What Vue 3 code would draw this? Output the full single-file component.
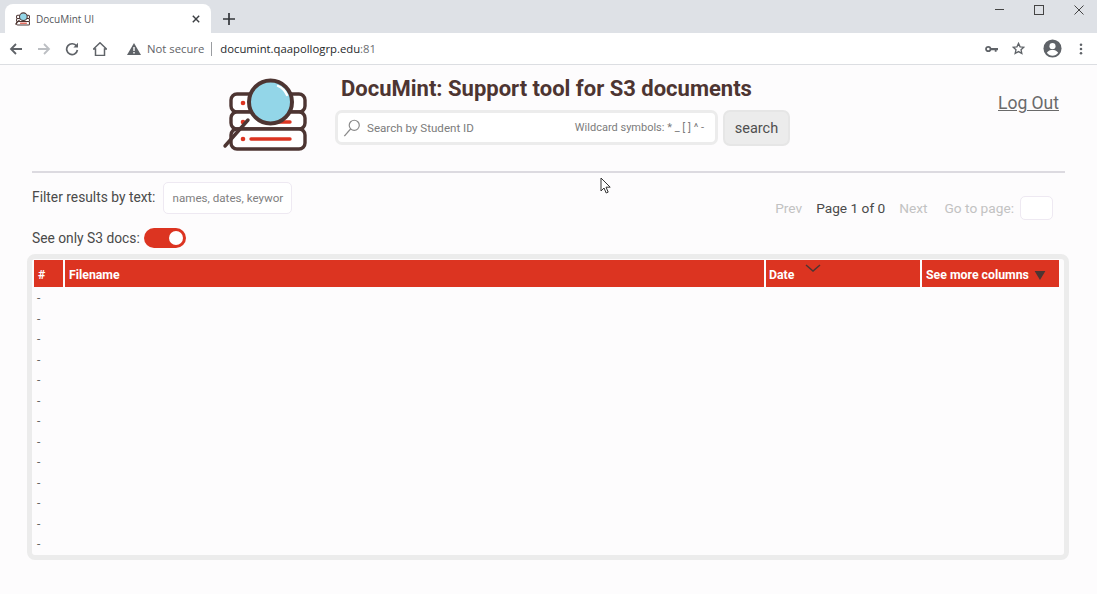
<template>
  <div class="window">
    <div class="tabstrip">
      <div class="tab">
        <svg class="favicon" viewBox="0 0 86 76" width="15" height="14">
          <g fill="#fff" stroke="#4d3532" stroke-width="6">
            <rect x="9" y="17" width="74" height="18" rx="6" />
            <rect x="9" y="35" width="74" height="17" rx="6" />
            <rect x="9" y="52" width="74" height="20" rx="6" />
          </g>
          <path d="M29 62h39" stroke="#dc3421" stroke-width="6" />
          <path d="M26 43L2 69" stroke="#4d3532" stroke-width="6" />
          <circle cx="48" cy="25" r="22" fill="#93d6e8" stroke="#4d3532" stroke-width="6" />
        </svg>
        <span class="tab-title">DocuMint UI</span>
        <svg class="tab-close" viewBox="0 0 10 10" width="8" height="8"><path d="M1 1l8 8M9 1l-8 8" stroke="#3c3f43" stroke-width="1.8" /></svg>
      </div>
      <svg class="new-tab" viewBox="0 0 12 12" width="12" height="12"><path d="M6 0v12M0 6h12" stroke="#33363a" stroke-width="1.7" /></svg>
      <div class="window-controls">
        <svg viewBox="0 0 10 10" width="10" height="10"><path d="M1 4.500h9" stroke="#444" stroke-width="1" /></svg>
        <svg viewBox="0 0 10 10" width="10" height="10"><rect x=".5" y=".5" width="9" height="9" fill="none" stroke="#444" stroke-width="1" /></svg>
        <svg viewBox="0 0 10 10" width="10" height="10"><path d="M.5.5l9 9M9.5.5l-9 9" stroke="#444" stroke-width="1" /></svg>
      </div>
    </div>

    <div class="toolbar">
      <svg class="nav" viewBox="0 0 14 14" width="14" height="14"><path d="M13 7H2M7 2L2 7l5 5" fill="none" stroke="#5f6368" stroke-width="1.8" /></svg>
      <svg class="nav" viewBox="0 0 14 14" width="14" height="14"><path d="M1 7h11M7 2l5 5-5 5" fill="none" stroke="#bcbfc3" stroke-width="1.8" /></svg>
      <svg class="nav" viewBox="0 0 14 14" width="14" height="14"><path d="M11.600 4.200A5.400 5.400 0 1 0 12.400 8" fill="none" stroke="#5f6368" stroke-width="1.700" /><path d="M8.400 5.400H13V.8z" fill="#5f6368" /></svg>
      <svg class="nav" viewBox="0 0 14 14" width="14" height="14"><path d="M7 .8L.5 7h2v6.500h9V7h2z" fill="none" stroke="#5f6368" stroke-width="1.500" /></svg>
      <svg class="warn" viewBox="0 0 14 12" width="14" height="12"><path d="M7 0l7 12H0z" fill="#5f6368" /><path d="M6.300 4h1.400v4H6.300zM6.300 9h1.400v1.400H6.300z" fill="#fff" /></svg>
      <span class="not-secure">Not secure</span>
      <span class="url-sep"></span>
      <span class="url">documint.qaapollogrp.edu<span class="port">:81</span></span>
      <div class="toolbar-right">
        <svg viewBox="0 0 14 8" width="13" height="8"><circle cx="3.500" cy="4" r="2.400" fill="none" stroke="#5f6368" stroke-width="1.900" /><path d="M6 3h8v2.400h-1.500V7h-2V5.400H6z" fill="#5f6368" /></svg>
        <svg viewBox="0 0 14 14" width="13" height="13"><path d="M7 1.500l1.700 3.700 4 .4-3 2.700.9 4L7 10.300l-3.600 2 .9-4-3-2.700 4-.4z" fill="none" stroke="#5f6368" stroke-width="1.400" /></svg>
        <svg class="avatar" viewBox="0 0 20 20" width="19" height="19"><circle cx="10" cy="10" r="9.500" fill="#5f6368" /><circle cx="10" cy="7.500" r="3.200" fill="#fff" /><path d="M4 14.500c1.500-2.400 3.800-3 6-3s4.500.6 6 3c-1.500 2-3.800 3-6 3s-4.500-1-6-3z" fill="#fff" /></svg>
        <svg viewBox="0 0 4 14" width="4" height="12"><circle cx="2" cy="2" r="1.500" fill="#5f6368" /><circle cx="2" cy="7" r="1.500" fill="#5f6368" /><circle cx="2" cy="12" r="1.500" fill="#5f6368" /></svg>
      </div>
    </div>

    <div class="page">
      <header class="app-header">
        <svg class="logo" viewBox="0 0 86 76" width="86" height="76">
          <g fill="#fff" stroke="#4d3532" stroke-width="3.400">
            <rect x="9" y="17" width="74" height="18" rx="6" />
            <rect x="9" y="35" width="74" height="17" rx="6" />
            <rect x="9" y="52" width="74" height="20" rx="6" />
          </g>
          <circle cx="21" cy="26" r="2.300" fill="#dc3421" />
          <circle cx="21" cy="45" r="2.300" fill="#dc3421" />
          <circle cx="21" cy="62" r="2.300" fill="#dc3421" />
          <path d="M29 62h39M50 45h18" stroke="#dc3421" stroke-width="3.400" stroke-linecap="round" />
          <path d="M26 43L3 69" stroke="#4d3532" stroke-width="3.400" stroke-linecap="round" />
          <circle cx="48.500" cy="25" r="21.500" fill="#93d6e8" stroke="#4d3532" stroke-width="4" />
          <path d="M56 9c4 1.500 7 4.500 9 9" fill="none" stroke="#fff" stroke-width="2.400" stroke-linecap="round" />
        </svg>
        <div class="header-main">
          <h1>DocuMint: Support tool for S3 documents</h1>
          <div class="search-row">
            <div class="search-box">
              <svg viewBox="0 0 20 20" width="18" height="20"><circle cx="12.500" cy="7" r="5.600" fill="none" stroke="#8a8a8a" stroke-width="1.300" /><path d="M8.500 11L1.500 19" stroke="#8a8a8a" stroke-width="1.500" /></svg>
              <span class="search-placeholder">Search by Student ID</span>
              <span class="wildcards">Wildcard symbols: * _ [ ] ^ -</span>
            </div>
            <button class="search-btn">search</button>
          </div>
        </div>
        <a class="logout">Log Out</a>
      </header>

      <hr class="rule" />

      <div class="controls">
        <div class="filters">
          <div class="filter-row">
            <span>Filter results by text:</span>
            <div class="filter-input">names, dates, keywor</div>
          </div>
          <div class="toggle-row">
            <span>See only S3 docs:</span>
            <span class="toggle"><span class="knob"></span></span>
          </div>
        </div>
        <div class="pager">
          <span class="muted">Prev</span>
          <span>Page 1 of 0</span>
          <span class="muted">Next</span>
          <span class="muted goto">Go to page:</span>
          <div class="page-input"></div>
        </div>
      </div>

      <div class="table-wrap">
        <div class="thead">
          <div class="th col-num">#</div>
          <div class="th col-file">Filename</div>
          <div class="th col-date">
            Date
            <svg class="date-sort" viewBox="0 0 16 8" width="16" height="8"><path d="M1 1l7 6 7-6" fill="none" stroke="#4d3532" stroke-width="1.500" /></svg>
          </div>
          <div class="th col-more">
            See more columns
            <svg viewBox="0 0 12 10" width="12" height="9"><path d="M0 0h12L6 10z" fill="#4d3532" /></svg>
          </div>
        </div>
        <div v-for="n in rows" :key="n" class="row">-</div>
      </div>

      <svg class="cursor" viewBox="0 0 12 17" width="12" height="17"><path d="M1 1v13l3-3 2.200 5 2-.9L6 10.200h4.200z" fill="#fff" stroke="#333" stroke-width="1" /></svg>
    </div>
  </div>
</template>

<script setup>
const rows = Array.from({ length: 13 }, (_, i) => i + 1);
</script>

<style>
html, body {
  margin: 0;
  background: #fdfcfd;
}
</style>

<style scoped>
.window {
  width: 1097px;
  height: 594px;
  overflow: hidden;
  font-family: Roboto, "Liberation Sans", sans-serif;
  color: #4a4a4a;
}

.tabstrip {
  height: 33px;
  display: flex;
  align-items: flex-end;
  background: #dee1e6;
  box-sizing: border-box;
}

.tab {
  width: 206px;
  height: 29px;
  margin-left: 5px;
  padding: 0 11px 0 10px;
  box-sizing: border-box;
  display: flex;
  align-items: center;
  background: #fff;
  border-radius: 8px 8px 0 0;
}

.favicon {
  flex: none;
}

.tab-title {
  margin-left: 6px;
  flex: 1;
  font-family: "Open Sans", "Liberation Sans", sans-serif;
  font-size: 10px;
  color: #55585c;
}

.new-tab {
  margin: 0 0 8px 12px;
}

.window-controls {
  margin-left: auto;
  align-self: flex-start;
  display: flex;
  gap: 30px;
  padding: 5px 13px 0 0;
}

.toolbar {
  height: 32px;
  box-sizing: border-box;
  display: flex;
  align-items: center;
  padding-left: 9px;
  background: #fff;
  border-bottom: 1px solid #dcdee2;
  font-family: "Open Sans", "Liberation Sans", sans-serif;
  font-size: 11.300px;
}

.nav {
  margin-right: 14px;
}

.warn {
  margin-left: 6px;
}

.not-secure {
  margin-left: 6px;
  color: #5f6368;
}

.url-sep {
  width: 1px;
  height: 14px;
  margin: 0 8px 0 7px;
  background: #9a9da1;
}

.url {
  color: #26282b;
}

.port {
  color: #6b6e72;
}

.toolbar-right {
  margin-left: auto;
  display: flex;
  align-items: center;
  gap: 14px;
  padding-right: 14px;
}

.avatar {
  margin: 0 3px 0 4px;
}

.page {
  position: relative;
  height: 529px;
  background: #fdfcfd;
  padding: 0 28px 0 27px;
}

.app-header {
  height: 106px;
  display: flex;
  align-items: flex-start;
  padding-top: 12px;
  box-sizing: border-box;
}

.logo {
  margin-left: 195px;
  flex: none;
}

.header-main {
  margin-left: 27px;
}

h1 {
  margin: 0 0 0 6px;
  font-size: 22px;
  line-height: 23px;
  font-weight: 700;
  color: #4d3532;
  white-space: nowrap;
}

.search-row {
  display: flex;
  gap: 5px;
  margin-top: 10px;
}

.search-box {
  width: 383px;
  height: 35px;
  box-sizing: border-box;
  display: flex;
  align-items: center;
  padding: 0 11px 0 5px;
  background: #fff;
  border: 3px solid #ececec;
  border-radius: 7px;
  font-size: 11.600px;
  color: #7c7c7c;
}

.search-placeholder {
  margin-left: 6px;
  flex: 1;
}

.wildcards {
  font-size: 11px;
}

.search-btn {
  width: 67px;
  height: 36px;
  padding: 0;
  background: #ececec;
  border: 2px solid #e6e6e6;
  border-radius: 7px;
  font-family: inherit;
  font-size: 14.500px;
  color: #4f4f4f;
}

.logout {
  margin: 16px 10px 0 auto;
  font-size: 17.500px;
  color: #6a6a6a;
  text-decoration: underline;
}

.rule {
  margin: 0 4px 0 5px;
  border: 0;
  height: 2px;
  background: #dcdae0;
}

.controls {
  height: 81px;
  display: flex;
  justify-content: space-between;
  font-size: 13.800px;
}

.filters {
  padding: 9px 0 0 5px;
}

.filter-row {
  display: flex;
  align-items: center;
  gap: 8px;
}

.filter-row span {
  margin-bottom: 2px;
}

.filter-input {
  width: 129px;
  height: 32px;
  box-sizing: border-box;
  border: 1px solid #eee9f2;
  border-radius: 5px;
  background: #fff;
  display: flex;
  align-items: center;
  justify-content: center;
  font-size: 11.600px;
  color: #808080;
  white-space: nowrap;
}

.toggle-row {
  display: flex;
  align-items: center;
  gap: 4px;
  margin-top: 14px;
}

.toggle {
  width: 42px;
  height: 20px;
  padding: 3px;
  box-sizing: border-box;
  display: flex;
  justify-content: flex-end;
  background: #dc3421;
  border-radius: 10px;
}

.knob {
  width: 14px;
  height: 14px;
  border-radius: 50%;
  background: #fff;
}

.pager {
  display: flex;
  align-items: center;
  align-self: flex-start;
  height: 24px;
  margin-top: 23px;
  padding-right: 16px;
  font-size: 13.700px;
}

.pager span {
  margin-left: 14px;
}

.pager .goto {
  margin-left: 17px;
}

.muted {
  color: #c2c2c2;
}

.page-input {
  width: 33px;
  height: 24px;
  margin-left: 6px;
  box-sizing: border-box;
  border: 1px solid #eee9f2;
  border-radius: 5px;
  background: #fff;
}

.table-wrap {
  height: 306px;
  box-sizing: border-box;
  padding: 1px 5px 0 2px;
  border: 5px solid #ececec;
  border-radius: 8px;
  font-size: 12px;
}

.thead {
  display: flex;
  gap: 2px;
  height: 27px;
  margin-bottom: 1px;
}

.th {
  display: flex;
  align-items: center;
  box-sizing: border-box;
  padding: 3px 0 0 4px;
  background: #dc3421;
  color: #fff;
  font-weight: 700;
  font-size: 12.300px;
}

.col-num {
  width: 29px;
}

.col-file {
  width: 699px;
}

.col-date {
  width: 154px;
  padding-left: 3px;
  position: relative;
}

.col-more {
  width: 137px;
  gap: 5px;
}

.date-sort {
  position: absolute;
  left: 39px;
  top: 4px;
}

.row {
  height: 20.500px;
  line-height: 20.500px;
  padding-left: 3px;
  color: #666;
}

.cursor {
  position: absolute;
  left: 600px;
  top: 112px;
}
</style>
